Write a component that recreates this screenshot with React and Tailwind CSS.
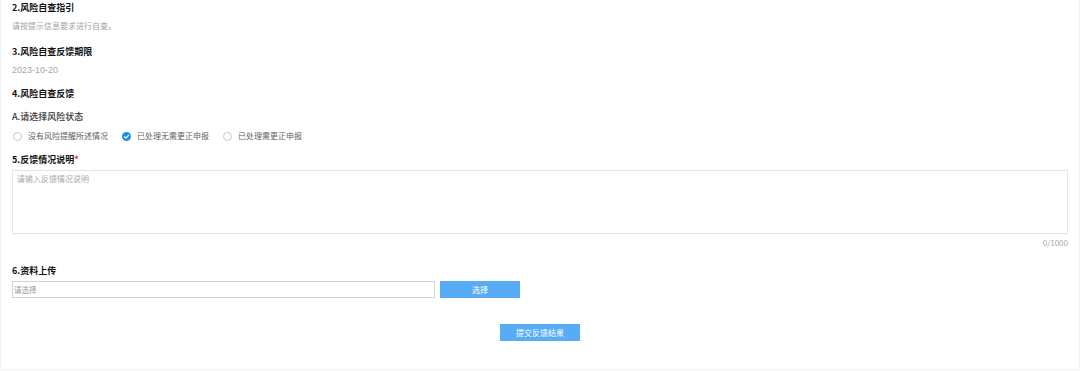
const options = [
    { label: '没有风险提醒所述情况', checked: false },
    { label: '已处理无需更正申报', checked: true },
    { label: '已处理需更正申报', checked: false },
];

function Radio({ checked }) {
    if (checked) {
        return (
            <svg width="9" height="9" viewBox="0 0 10 10" className="shrink-0">
                <circle cx="5" cy="5" r="5" fill="#1b8ee8" />
                <path d="M2.6 5.1 L4.4 6.8 L7.5 3.5" fill="none" stroke="#fff" strokeWidth="1.3" strokeLinecap="round" strokeLinejoin="round" />
            </svg>
        );
    }
    return <span className="shrink-0 w-[9px] h-[9px] rounded-full border border-[#c8c8c8] bg-white" />;
}

export default function App() {
    const heading = 'text-[9px] leading-[15px] font-bold text-[#111]';
    return (
        <div
            className="w-full h-[370px] bg-white border-x border-b border-[#efefef] px-[11px]"
            style={{ fontFamily: '"Noto Sans CJK SC", "Noto Sans", sans-serif' }}
        >
            {/* Section 2 */}
            <h2 className={heading}>2.风险自查指引</h2>
            <p className="mt-[4px] text-[8px] leading-[14px] text-[#a3a3a3]">请按提示信息要求进行自查。</p>

            {/* Section 3 */}
            <h2 className={`${heading} mt-[11px]`}>3.风险自查反馈期限</h2>
            <p
                className="mt-[4px] text-[9px] leading-[14px] text-[#a8a8a8]"
                style={{ fontFamily: '"Liberation Sans", sans-serif' }}
            >
                2023-10-20
            </p>

            {/* Section 4 */}
            <h2 className={`${heading} mt-[9px]`}>4.风险自查反馈</h2>
            <p className="mt-[9px] text-[9px] leading-[14px] font-medium text-[#333]">A.请选择风险状态</p>
            <div className="mt-[5px] h-[14px] flex items-center pl-px">
                {options.map((o) => (
                    <label key={o.label} className="flex items-center gap-[6px] mr-[14px]">
                        <Radio checked={o.checked} />
                        <span className="text-[8px] leading-[14px] text-[#5f5f5f]">{o.label}</span>
                    </label>
                ))}
            </div>

            {/* Section 5 */}
            <h2 className={`${heading} mt-[9px]`}>
                5.反馈情况说明<span className="text-[#e02020]">*</span>
            </h2>
            <textarea
                className="mt-[3px] block w-full h-[64px] resize-none border border-[#e3e3e3] px-[4px] py-px text-[8px] leading-[14px] outline-none placeholder:text-[#a8a8a8]"
                placeholder="请输入反馈情况说明"
            />
            <div className="mt-[2px] text-right text-[8px] leading-[14px] text-[#a8a8a8]">0/1000</div>

            {/* Section 6 */}
            <h2 className={`${heading} mt-[13px]`}>6.资料上传</h2>
            <div className="mt-[3px] flex items-center gap-[5px]">
                <input
                    className="w-[423px] h-[17px] border border-[#d3d3d8] px-px text-[7.5px] outline-none placeholder:text-[#999]"
                    placeholder="请选择"
                />
                <button className="w-[80px] h-[17px] bg-[#57acf5] text-white text-[8px] leading-[17px]">选择</button>
            </div>

            <div className="mt-[26px] flex justify-center">
                <button className="w-[80px] h-[17px] bg-[#57acf5] text-white text-[8px] leading-[17px]">提交反馈结果</button>
            </div>
        </div>
    );
}
